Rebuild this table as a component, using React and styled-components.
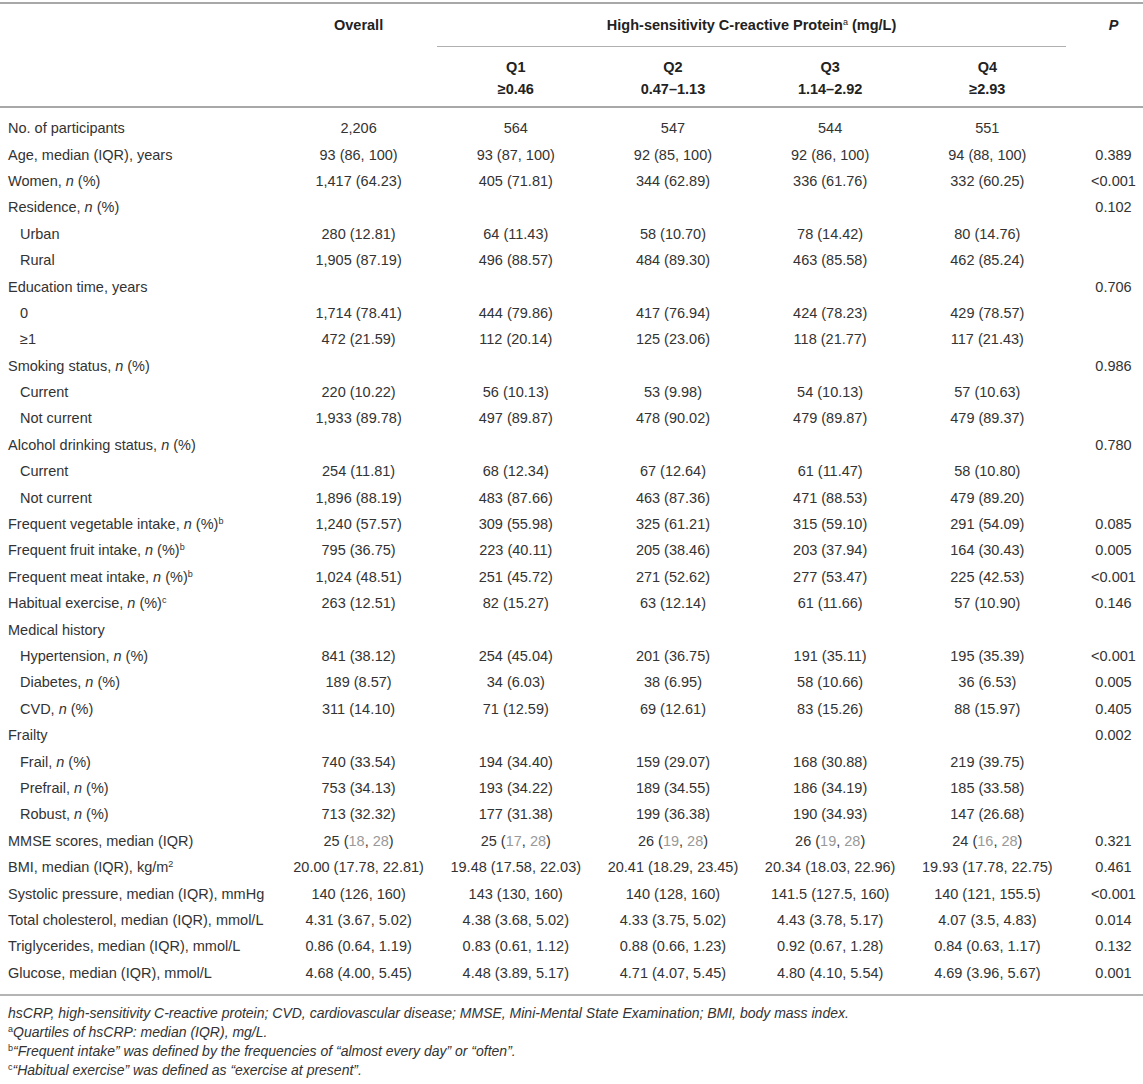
import styled, { createGlobalStyle } from 'styled-components'

const GlobalStyle = createGlobalStyle`
  html, body {
    margin: 0;
    padding: 0;
    background: #fff;
  }
  body {
    font-family: "Liberation Sans", Arial, sans-serif;
    color: #333;
  }
`

const COLS = '280px repeat(5, 157.2px) 1fr'

const Wrap = styled.div`
  width: 1143px;
  padding-top: 2px;
  font-size: 14.5px;
`

const Head = styled.div`
  display: grid;
  grid-template-columns: ${COLS};
  border-top: 2px solid #a8a8a8;
  border-bottom: 2px solid #a8a8a8;
  font-weight: bold;
  color: #222;
`

const HeadCell = styled.div`
  grid-column: ${(p) => p.col};
  grid-row: ${(p) => p.row};
  text-align: center;
  padding-left: ${(p) => (p.shift ? '18px' : '0')};
  line-height: 22px;
  padding-top: ${(p) => p.pt || 0}px;
  padding-bottom: ${(p) => p.pb || 0}px;
  font-style: ${(p) => (p.italic ? 'italic' : 'normal')};
`

const Span = styled.div`
  grid-column: 3 / 7;
  grid-row: 1;
  text-align: center;
  line-height: 22px;
  padding-top: 10px;
  padding-bottom: 10px;
  border-bottom: 1px solid #b0b0b0;
`

const Sup = styled.sup`
  font-size: 9px;
  font-weight: normal;
  vertical-align: 5px;
  line-height: 0;
  font-style: normal;
`

const Body = styled.div`
  padding: 7px 0 8px;
  border-bottom: 2px solid #b4b4b4;
`

const Row = styled.div`
  display: grid;
  grid-template-columns: ${COLS};
  height: 26.4px;
  align-items: center;
`

const Label = styled.div`
  padding-left: ${(p) => (p.indent ? 20 : 8)}px;
  white-space: nowrap;
`

const Val = styled.div`
  text-align: center;
  white-space: nowrap;
`

const PVal = styled(Val)`
  padding-left: 18px;
`

const Dim = styled.span`
  color: #999;
`

const Notes = styled.div`
  padding: 8px 0 0 8px;
  font-style: italic;
  font-size: 14px;
  line-height: 19px;
  color: #333;
`

const Note = styled.div`
  white-space: nowrap;
`

const N = () => <i>n</i>

const mm = (a, b, c) => (
  <>
    {a} (<Dim>{b}</Dim>, <Dim>{c}</Dim>)
  </>
)

const rows = [
  [<>No. of participants</>, 0, ['2,206', '564', '547', '544', '551'], ''],
  [<>Age, median (IQR), years</>, 0, ['93 (86, 100)', '93 (87, 100)', '92 (85, 100)', '92 (86, 100)', '94 (88, 100)'], '0.389'],
  [<>Women, <N /> (%)</>, 0, ['1,417 (64.23)', '405 (71.81)', '344 (62.89)', '336 (61.76)', '332 (60.25)'], '<0.001'],
  [<>Residence, <N /> (%)</>, 0, [], '0.102'],
  [<>Urban</>, 1, ['280 (12.81)', '64 (11.43)', '58 (10.70)', '78 (14.42)', '80 (14.76)'], ''],
  [<>Rural</>, 1, ['1,905 (87.19)', '496 (88.57)', '484 (89.30)', '463 (85.58)', '462 (85.24)'], ''],
  [<>Education time, years</>, 0, [], '0.706'],
  [<>0</>, 1, ['1,714 (78.41)', '444 (79.86)', '417 (76.94)', '424 (78.23)', '429 (78.57)'], ''],
  [<>≥1</>, 1, ['472 (21.59)', '112 (20.14)', '125 (23.06)', '118 (21.77)', '117 (21.43)'], ''],
  [<>Smoking status, <N /> (%)</>, 0, [], '0.986'],
  [<>Current</>, 1, ['220 (10.22)', '56 (10.13)', '53 (9.98)', '54 (10.13)', '57 (10.63)'], ''],
  [<>Not current</>, 1, ['1,933 (89.78)', '497 (89.87)', '478 (90.02)', '479 (89.87)', '479 (89.37)'], ''],
  [<>Alcohol drinking status, <N /> (%)</>, 0, [], '0.780'],
  [<>Current</>, 1, ['254 (11.81)', '68 (12.34)', '67 (12.64)', '61 (11.47)', '58 (10.80)'], ''],
  [<>Not current</>, 1, ['1,896 (88.19)', '483 (87.66)', '463 (87.36)', '471 (88.53)', '479 (89.20)'], ''],
  [<>Frequent vegetable intake, <N /> (%)<Sup>b</Sup></>, 0, ['1,240 (57.57)', '309 (55.98)', '325 (61.21)', '315 (59.10)', '291 (54.09)'], '0.085'],
  [<>Frequent fruit intake, <N /> (%)<Sup>b</Sup></>, 0, ['795 (36.75)', '223 (40.11)', '205 (38.46)', '203 (37.94)', '164 (30.43)'], '0.005'],
  [<>Frequent meat intake, <N /> (%)<Sup>b</Sup></>, 0, ['1,024 (48.51)', '251 (45.72)', '271 (52.62)', '277 (53.47)', '225 (42.53)'], '<0.001'],
  [<>Habitual exercise, <N /> (%)<Sup>c</Sup></>, 0, ['263 (12.51)', '82 (15.27)', '63 (12.14)', '61 (11.66)', '57 (10.90)'], '0.146'],
  [<>Medical history</>, 0, [], ''],
  [<>Hypertension, <N /> (%)</>, 1, ['841 (38.12)', '254 (45.04)', '201 (36.75)', '191 (35.11)', '195 (35.39)'], '<0.001'],
  [<>Diabetes, <N /> (%)</>, 1, ['189 (8.57)', '34 (6.03)', '38 (6.95)', '58 (10.66)', '36 (6.53)'], '0.005'],
  [<>CVD, <N /> (%)</>, 1, ['311 (14.10)', '71 (12.59)', '69 (12.61)', '83 (15.26)', '88 (15.97)'], '0.405'],
  [<>Frailty</>, 0, [], '0.002'],
  [<>Frail, <N /> (%)</>, 1, ['740 (33.54)', '194 (34.40)', '159 (29.07)', '168 (30.88)', '219 (39.75)'], ''],
  [<>Prefrail, <N /> (%)</>, 1, ['753 (34.13)', '193 (34.22)', '189 (34.55)', '186 (34.19)', '185 (33.58)'], ''],
  [<>Robust, <N /> (%)</>, 1, ['713 (32.32)', '177 (31.38)', '199 (36.38)', '190 (34.93)', '147 (26.68)'], ''],
  [<>MMSE scores, median (IQR)</>, 0, [mm(25, 18, 28), mm(25, 17, 28), mm(26, 19, 28), mm(26, 19, 28), mm(24, 16, 28)], '0.321'],
  [<>BMI, median (IQR), kg/m<Sup>2</Sup></>, 0, ['20.00 (17.78, 22.81)', '19.48 (17.58, 22.03)', '20.41 (18.29, 23.45)', '20.34 (18.03, 22.96)', '19.93 (17.78, 22.75)'], '0.461'],
  [<>Systolic pressure, median (IQR), mmHg</>, 0, ['140 (126, 160)', '143 (130, 160)', '140 (128, 160)', '141.5 (127.5, 160)', '140 (121, 155.5)'], '<0.001'],
  [<>Total cholesterol, median (IQR), mmol/L</>, 0, ['4.31 (3.67, 5.02)', '4.38 (3.68, 5.02)', '4.33 (3.75, 5.02)', '4.43 (3.78, 5.17)', '4.07 (3.5, 4.83)'], '0.014'],
  [<>Triglycerides, median (IQR), mmol/L</>, 0, ['0.86 (0.64, 1.19)', '0.83 (0.61, 1.12)', '0.88 (0.66, 1.23)', '0.92 (0.67, 1.28)', '0.84 (0.63, 1.17)'], '0.132'],
  [<>Glucose, median (IQR), mmol/L</>, 0, ['4.68 (4.00, 5.45)', '4.48 (3.89, 5.17)', '4.71 (4.07, 5.45)', '4.80 (4.10, 5.54)', '4.69 (3.96, 5.67)'], '0.001'],
]

const quartiles = [
  ['Q1', '≥0.46'],
  ['Q2', '0.47–1.13'],
  ['Q3', '1.14–2.92'],
  ['Q4', '≥2.93'],
]

export default function App() {
  return (
    <Wrap>
      <GlobalStyle />
      <Head>
        <HeadCell col={2} row={1} pt={10}>Overall</HeadCell>
        <Span>
          High-sensitivity C-reactive Protein<Sup>a</Sup> (mg/L)
        </Span>
        <HeadCell col={7} row={1} pt={10} shift italic>P</HeadCell>
        {quartiles.map(([q, r], i) => (
          <HeadCell key={q} col={i + 3} row={2} pt={9} pb={6}>
            {q}
            <br />
            {r}
          </HeadCell>
        ))}
      </Head>
      <Body>
        {rows.map(([label, indent, vals, p], i) => (
          <Row key={i}>
            <Label indent={indent}>{label}</Label>
            {[0, 1, 2, 3, 4].map((k) => (
              <Val key={k}>{vals[k] || ''}</Val>
            ))}
            <PVal>{p}</PVal>
          </Row>
        ))}
      </Body>
      <Notes>
        <Note>hsCRP, high-sensitivity C-reactive protein; CVD, cardiovascular disease; MMSE, Mini-Mental State Examination; BMI, body mass index.</Note>
        <Note><Sup>a</Sup>Quartiles of hsCRP: median (IQR), mg/L.</Note>
        <Note><Sup>b</Sup>“Frequent intake” was defined by the frequencies of “almost every day” or “often”.</Note>
        <Note><Sup>c</Sup>“Habitual exercise” was defined as “exercise at present”.</Note>
      </Notes>
    </Wrap>
  )
}
